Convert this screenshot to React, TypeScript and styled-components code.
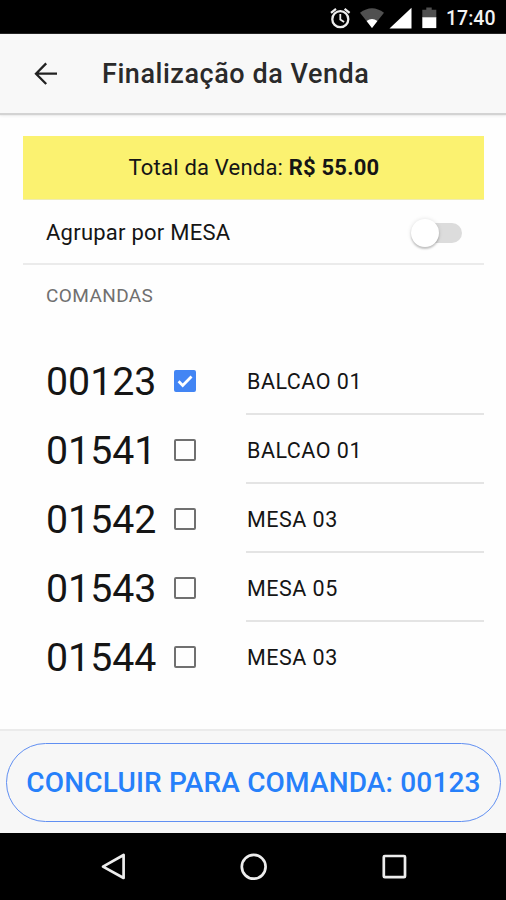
import React, { useState } from "react";
import styled, { createGlobalStyle } from "styled-components";

const GlobalStyle = createGlobalStyle`
  * { box-sizing: border-box; }
  body { margin: 0; background: #fefefe; color: #151515; font-family: Roboto, sans-serif; }
  button { font-family: inherit; }
`;

const Screen = styled.div`
  width: 506px;
  height: 900px;
  display: flex;
  flex-direction: column;
  overflow: hidden;
  background: #fefefe;
`;

const StatusBar = styled.div`
  height: 34px;
  flex: none;
  display: flex;
  justify-content: flex-end;
  align-items: center;
  padding: 3px 10px 0 0;
  background: #000;
  color: #f2f2f2;
`;

const StatusIcons = styled.svg`
  width: 110px;
  height: 32px;
  margin-right: 7px;
`;

const Clock = styled.span`
  font-size: 19.5px;
  font-weight: 500;
  line-height: 32px;
  width: 51px;
  padding-left: 1px;
  white-space: nowrap;
`;

const Header = styled.header`
  height: 79px;
  flex: none;
  display: flex;
  align-items: center;
  padding-left: 33px;
  background: #f8f8f8;
  box-shadow: 0 1px 1px 1px #d3d3d3, 0 3px 3px rgba(0, 0, 0, 0.07);
`;

const BackButton = styled.button`
  display: flex;
  width: 69px;
  padding: 0;
  border: 0;
  background: none;
`;

const Title = styled.h1`
  margin: 0;
  font-size: 27px;
  font-weight: 500;
  line-height: 40px;
  color: #2a2a2a;
  letter-spacing: 0.54px;
  white-space: nowrap;
`;

const Content = styled.main`
  flex: 1;
  padding: 23px 22px 0 23px;
`;

const Total = styled.div`
  height: 64px;
  display: flex;
  align-items: center;
  justify-content: center;
  padding-left: 1px;
  background: #fbf270;
  border-bottom: 1px solid #eeebb5;
  font-size: 22px;
  letter-spacing: 0.2px;
  white-space: pre;
`;

const GroupRow = styled.div`
  height: 65px;
  display: flex;
  align-items: center;
  justify-content: space-between;
  padding: 2px 22px 0 23px;
  border-bottom: 2px solid #ebebeb;
  font-size: 22px;
  letter-spacing: 0.24px;
`;

const Switch = styled.button`
  display: flex;
  padding: 0;
  border: 0;
  background: none;
`;

const Rail = styled.span`
  display: flex;
  align-items: center;
  width: 43px;
  height: 20px;
  border-radius: 10px;
  background: #dcdcdc;
`;

const Knob = styled.span<{ $on: boolean }>`
  flex: none;
  width: 28px;
  height: 28px;
  margin-left: ${(p) => (p.$on ? "21px" : "-8px")};
  border-radius: 50%;
  background: #fff;
  box-shadow: 0 2px 2px rgba(0, 0, 0, 0.2), 0 0 4px rgba(0, 0, 0, 0.12);
`;

const SectionLabel = styled.h2`
  margin: 0;
  height: 82px;
  padding: 15px 0 0 23px;
  font-size: 19px;
  line-height: 32px;
  font-weight: 400;
  letter-spacing: 0.4px;
  color: #707070;
`;

const OrderRow = styled.div`
  height: 69px;
  display: flex;
  padding-left: 23px;
`;

const OrderNumber = styled.span`
  width: 128px;
  font-size: 39.3px;
  line-height: 70px;
`;

const Box = styled.button<{ $checked: boolean }>`
  display: flex;
  flex: none;
  width: 22px;
  height: 22px;
  margin: 23px 50px 0 0;
  padding: 0;
  border: 2px solid ${(p) => (p.$checked ? "#4285f4" : "#707070")};
  border-radius: 2px;
  background: ${(p) => (p.$checked ? "#4285f4" : "transparent")};
`;

const Place = styled.span<{ $last: boolean }>`
  flex: 1;
  height: 68px;
  padding: 1px 0 0 1px;
  border-bottom: ${(p) => (p.$last ? "0" : "2px solid #e4e4e4")};
  font-size: 21.5px;
  line-height: 68px;
  letter-spacing: 0.5px;
`;

const Footer = styled.footer`
  flex: none;
  height: 104px;
  padding: 12px 5px 0 6px;
  background: #f7f7f7;
  border-top: 2px solid #ebebeb;
`;

const Finish = styled.button`
  display: flex;
  align-items: center;
  justify-content: center;
  width: 100%;
  height: 79px;
  padding: 0;
  border: 1.5px solid #608ff2;
  border-radius: 40px;
  background: none;
  color: #2680fa;
  font-size: 28px;
  font-weight: 500;
  letter-spacing: 0.16px;
  white-space: nowrap;
`;

const NavBar = styled.nav`
  flex: none;
  height: 67px;
  display: flex;
  justify-content: space-between;
  align-items: center;
  padding: 0 97px 0 98px;
  background: #000;
`;

const NavIcon = styled.svg`
  width: 30px;
  height: 30px;
  fill: none;
  stroke: #ededed;
  stroke-width: 2.7;
`;

const orders = [
  { number: "00123", place: "BALCAO 01" },
  { number: "01541", place: "BALCAO 01" },
  { number: "01542", place: "MESA 03" },
  { number: "01543", place: "MESA 05" },
  { number: "01544", place: "MESA 03" },
];

export default function App() {
  const [selected, setSelected] = useState("00123");
  const [grouped, setGrouped] = useState(false);

  return (
    <>
      <GlobalStyle />
      <Screen>
        <StatusBar>
          <StatusIcons viewBox="328 2 110 32">
            <g fill="none" stroke="#ededed">
              <circle cx="340.3" cy="18.2" r="8" strokeWidth="2.3" />
              <path d="M340.3 13v5.5l3.8 2.6" strokeWidth="1.8" />
              <path d="M331 11.9l5-4.1M349.6 11.9l-5-4.1" strokeWidth="2.2" />
            </g>
            <path d="M360 11.8Q372 2.8 384 11.8L372 27z" fill="#505050" />
            <path d="M366.6 20.1Q372 16 377.4 20.1L372 27z" fill="#fff" />
            <path d="M411.5 6.8v20.6h-22z" fill="#fff" />
            <path d="M422.3 8.7h4v-2.3h5.4v2.3h4.6v8.2h-14z" fill="#505050" />
            <path d="M422.3 16.3h14v10.8h-14z" fill="#fff" />
          </StatusIcons>
          <Clock>17:40</Clock>
        </StatusBar>
        <Header>
          <BackButton aria-label="Voltar">
            <svg width="26" height="26" viewBox="0 0 26 26" fill="none" stroke="#222" strokeWidth="2.3">
              <path d="M24 12.7H3.4M13.2 2.4L3 12.7 13.2 23" />
            </svg>
          </BackButton>
          <Title>Finalização da Venda</Title>
        </Header>
        <Content>
          <Total>Total da Venda: <strong>R$ 55.00</strong></Total>
          <GroupRow>
            <span>Agrupar por MESA</span>
            <Switch role="switch" aria-checked={grouped} onClick={() => setGrouped(!grouped)}>
              <Rail><Knob $on={grouped} /></Rail>
            </Switch>
          </GroupRow>
          <SectionLabel>COMANDAS</SectionLabel>
          {orders.map((o, i) => {
            const checked = o.number === selected;
            return (
              <OrderRow key={o.number}>
                <OrderNumber>{o.number}</OrderNumber>
                <Box $checked={checked} role="checkbox" aria-checked={checked} onClick={() => setSelected(o.number)}>
                  {checked && (
                    <svg width="18" height="18" viewBox="0 0 18 18" fill="none" stroke="#fff" strokeWidth="2.8">
                      <path d="M2.6 9.3l4.1 4.1 8.8-8.9" />
                    </svg>
                  )}
                </Box>
                <Place $last={i === orders.length - 1}>{o.place}</Place>
              </OrderRow>
            );
          })}
        </Content>
        <Footer>
          <Finish>CONCLUIR PARA COMANDA: {selected}</Finish>
        </Footer>
        <NavBar>
          <NavIcon viewBox="0 0 30 30"><path d="M25.6 3v23L5 14.6z" strokeLinejoin="round" /></NavIcon>
          <NavIcon viewBox="0 0 30 30"><circle cx="14.7" cy="14.8" r="11.9" /></NavIcon>
          <NavIcon viewBox="0 0 30 30"><rect x="4.8" y="4" width="21.2" height="21.2" rx="1" /></NavIcon>
        </NavBar>
      </Screen>
    </>
  );
}
